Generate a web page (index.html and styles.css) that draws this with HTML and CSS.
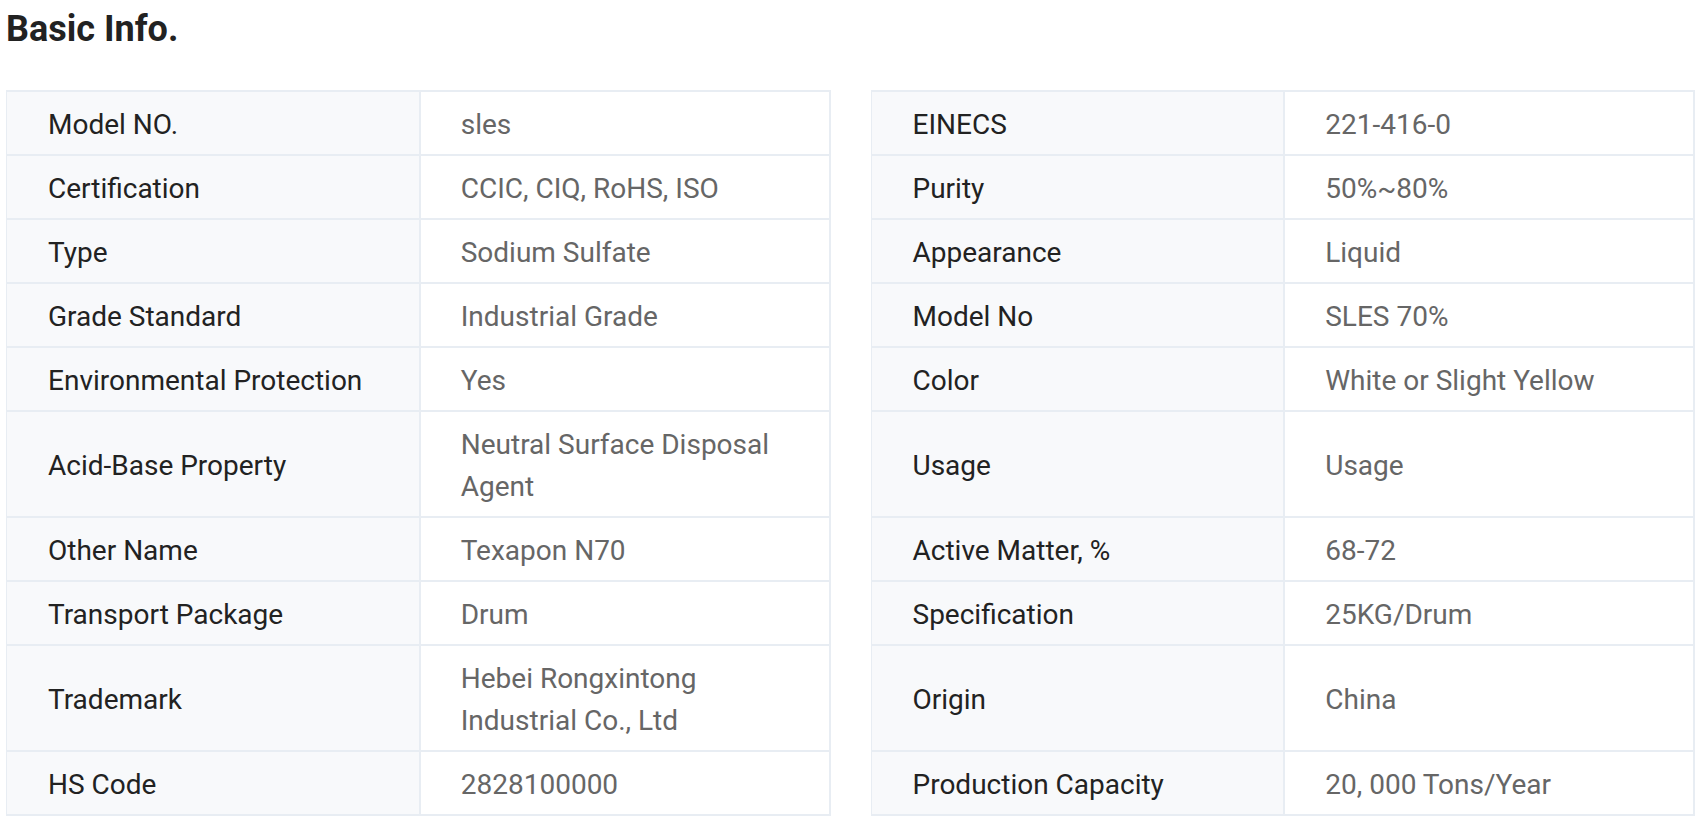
FILE: index.html
```html
<!DOCTYPE html>
<html>
<head>
<meta charset="utf-8">
<link rel="stylesheet" href="styles.css">
</head>
<body>
<div class="page">
  <h2 class="title">Basic Info.</h2>
  <div class="specs">
    <div class="cell label left first">Model NO.</div><div class="cell value left first">sles</div>
    <div class="cell label right first">EINECS</div><div class="cell value right first">221-416-0</div>

    <div class="cell label left">Certification</div><div class="cell value left">CCIC, CIQ, RoHS, ISO</div>
    <div class="cell label right">Purity</div><div class="cell value right">50%~80%</div>

    <div class="cell label left">Type</div><div class="cell value left">Sodium Sulfate</div>
    <div class="cell label right">Appearance</div><div class="cell value right">Liquid</div>

    <div class="cell label left">Grade Standard</div><div class="cell value left">Industrial Grade</div>
    <div class="cell label right">Model No</div><div class="cell value right">SLES 70%</div>

    <div class="cell label left">Environmental Protection</div><div class="cell value left">Yes</div>
    <div class="cell label right">Color</div><div class="cell value right">White or Slight Yellow</div>

    <div class="cell label left">Acid-Base Property</div><div class="cell value left">Neutral Surface Disposal Agent</div>
    <div class="cell label right">Usage</div><div class="cell value right">Usage</div>

    <div class="cell label left">Other Name</div><div class="cell value left">Texapon N70</div>
    <div class="cell label right">Active Matter, %</div><div class="cell value right">68-72</div>

    <div class="cell label left">Transport Package</div><div class="cell value left">Drum</div>
    <div class="cell label right">Specification</div><div class="cell value right">25KG/Drum</div>

    <div class="cell label left">Trademark</div><div class="cell value left">Hebei Rongxintong Industrial Co., Ltd</div>
    <div class="cell label right">Origin</div><div class="cell value right">China</div>

    <div class="cell label left">HS Code</div><div class="cell value left">2828100000</div>
    <div class="cell label right">Production Capacity</div><div class="cell value right">20, 000 Tons/Year</div>
  </div>
</div>
</body>
</html>
```
FILE: styles.css
```css
html, body {
  margin: 0;
  padding: 0;
  background: #ffffff;
}
.page {
  padding: 8px 4px 0 6px;
  font-family: Roboto, "Liberation Sans", sans-serif;
}
.title {
  margin: 0 0 40px 0;
  font-size: 36px;
  font-weight: 700;
  line-height: 42px;
  color: #222222;
}
.specs {
  display: grid;
  grid-template-columns: 83fr 82fr 40px 83fr 82fr;
}
.cell {
  display: flex;
  align-items: center;
  padding: 12px 36px 8px 40px;
  font-size: 28px;
  line-height: 42px;
  border-bottom: 2px solid #e8edf3;
}
.cell.first {
  border-top: 2px solid #e8edf3;
}
.label {
  background: #f8f9fb;
  color: #222222;
  border-right: 2px solid #e8edf3;
  border-left: 1px solid #e8edf3;
  padding-left: 41px;
}
.value {
  color: #666666;
  border-right: 2px solid #e8edf3;
}
.label.left { grid-column: 1; }
.value.left { grid-column: 2; }
.label.right { grid-column: 4; }
.value.right { grid-column: 5; }
```
